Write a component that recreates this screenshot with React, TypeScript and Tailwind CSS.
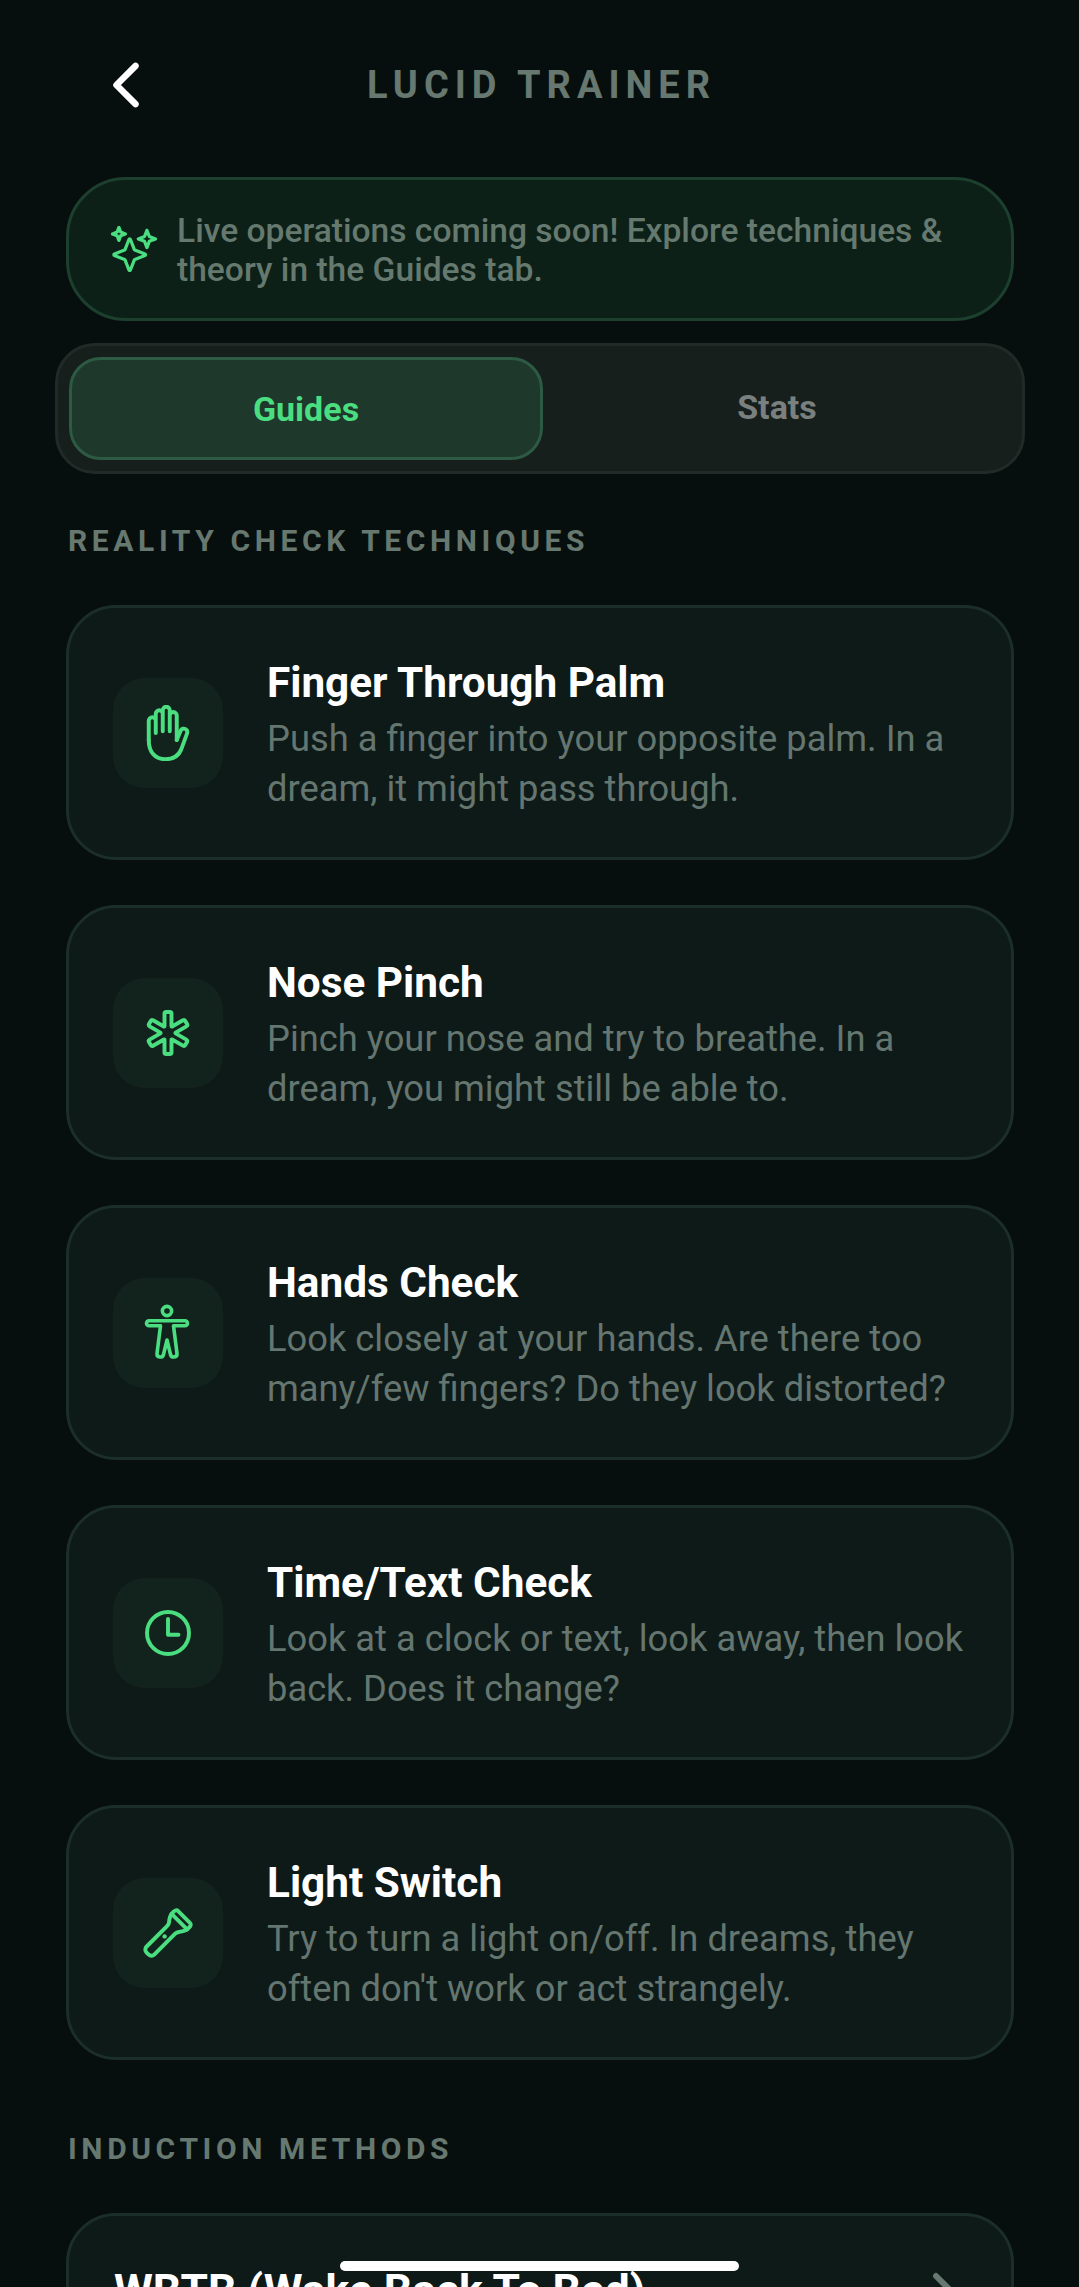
import React from 'react';
import {
  IoChevronBack,
  IoChevronForward,
  IoFlashlightOutline,
  IoHandLeftOutline,
  IoMedicalOutline,
  IoSparklesOutline,
  IoTimeOutline,
} from 'react-icons/io5';

// figure with straight arms, the icon pack's body outline has curved ones
function FigureIcon({ className }: { className?: string }) {
  return (
    <svg viewBox="25 25 60 60" fill="none" stroke="currentColor" strokeWidth="3.6" strokeLinejoin="round" className={className}>
      <circle cx="54" cy="33" r="4.6" />
      <path d="M36 42.7H72a2.5 2.5 0 0 1 0 5H60.5L64 75.5a3.3 3.3 0 0 1-6.5 1L54 62l-3.5 14.5a3.3 3.3 0 0 1-6.5-1L47.5 47.7H36a2.5 2.5 0 0 1 0-5z" />
    </svg>
  );
}

const ioClass = 'h-[56px] w-[56px] text-[#4ade80] [&_path]:stroke-[36px]';

const techniques = [
  {
    title: 'Finger Through Palm',
    text: 'Push a finger into your opposite palm. In a dream, it might pass through.',
    Icon: IoHandLeftOutline,
    iconClass: ioClass,
  },
  {
    title: 'Nose Pinch',
    text: 'Pinch your nose and try to breathe. In a dream, you might still be able to.',
    Icon: IoMedicalOutline,
    iconClass: ioClass,
  },
  {
    title: 'Hands Check',
    text: 'Look closely at your hands. Are there too many/few fingers? Do they look distorted?',
    Icon: FigureIcon,
    iconClass: 'h-[60px] w-[60px] text-[#4ade80]',
  },
  {
    title: 'Time/Text Check',
    text: 'Look at a clock or text, look away, then look back. Does it change?',
    Icon: IoTimeOutline,
    iconClass: ioClass,
  },
  {
    title: 'Light Switch',
    text: "Try to turn a light on/off. In dreams, they often don't work or act strangely.",
    Icon: IoFlashlightOutline,
    iconClass: ioClass,
  },
];

export default function App() {
  return (
    <div className="relative h-[2287px] w-full overflow-hidden bg-[#060f0d] font-['Roboto',sans-serif]">
      {/* Header */}
      <header className="mb-[7px] flex h-[170px] items-center justify-between px-[92px]">
        <IoChevronBack size={68} className="text-white" />
        <h1 className="ml-[4px] text-[38px] font-bold tracking-[6px] text-[#66786f]">LUCID TRAINER</h1>
        <div className="w-[68px]" />
      </header>

      <main className="pl-[66px] pr-[65px]">
        {/* Notice */}
        <div className="flex h-[144px] items-center gap-[20px] rounded-[60px] border-[3px] border-[#1c3f2e] bg-[#0c2018] pl-[42px] pr-[34px]">
          <IoSparklesOutline size={46} className="shrink-0 text-[#4ade80] [&_path]:stroke-[36px]" />
          <p className="pt-[2px] text-[33.6px] font-medium leading-[39px] text-[#66796f]">
            Live operations coming soon! Explore techniques &amp; theory in the Guides tab.
          </p>
        </div>

        {/* Tabs */}
        <div className="-mx-[11px] mt-[22px] flex h-[131px] rounded-[40px] border-[3px] border-[#222a28] bg-[#171f1d] p-[11px]">
          <div className="flex w-[474px] items-center justify-center rounded-[32px] border-[3px] border-[#2c5a43] bg-[#1f382c] pt-[2px] text-[34px] font-bold text-[#4ade80]">
            Guides
          </div>
          <div className="flex flex-1 items-center justify-center pb-[3px] text-[34px] font-bold text-[#7a807e]">
            Stats
          </div>
        </div>

        <h2 className="mb-[44px] mt-[47px] pl-[2px] text-[30px] font-bold leading-[40px] tracking-[4.6px] text-[#66786f]">
          REALITY CHECK TECHNIQUES
        </h2>

        <div className="flex flex-col gap-[45px]">
          {techniques.map(({ title, text, Icon, iconClass }) => (
            <div
              key={title}
              className="flex h-[255px] items-center gap-[44px] rounded-[50px] border-[3px] border-[#1c2e2a] bg-[#0e1a18] pl-[44px] pr-[30px]"
            >
              <div className="flex h-[110px] w-[110px] shrink-0 items-center justify-center rounded-[32px] bg-[#12231d]">
                <Icon className={iconClass} />
              </div>
              <div className="pt-[7px]">
                <h3 className="mb-[6px] text-[42.3px] font-bold leading-[50px] text-white">{title}</h3>
                <p className="text-[36.3px] leading-[50px] text-[#64766f]">{text}</p>
              </div>
            </div>
          ))}
        </div>

        <h2 className="mb-[44px] mt-[69px] pl-[2px] text-[30px] font-bold leading-[40px] tracking-[4.6px] text-[#66786f]">
          INDUCTION METHODS
        </h2>

        <div className="flex h-[255px] items-start justify-between rounded-[50px] border-[3px] border-[#1c2e2a] bg-[#0e1a18] pl-[45px] pr-[34px] pt-[50px]">
          <h3 className="text-[44.4px] font-bold leading-[50px] text-white">WBTB (Wake Back To Bed)</h3>
          <IoChevronForward size={64} className="-mt-[4px] text-[#66786f]" />
        </div>
      </main>

      {/* Home indicator */}
      <div className="absolute left-[340px] top-[2261px] h-[10px] w-[399px] rounded-full bg-white" />
    </div>
  );
}
